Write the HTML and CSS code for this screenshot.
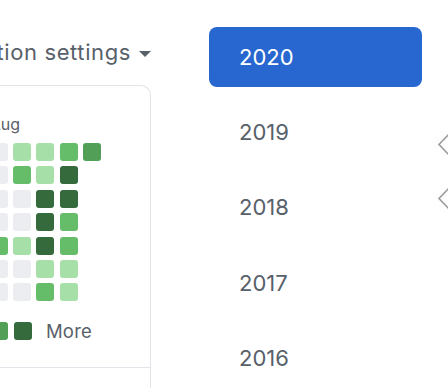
FILE: index.html
```html
<!DOCTYPE html>
<html lang="en">

<head>
    <meta charset="UTF-8">
    <meta name="viewport" content="width=device-width, initial-scale=1.0">
    <title>Contributions</title>
    <link rel="stylesheet" href="styles.css">
</head>

<body>
    <div class="page">
        <div class="left">
            <div class="settings">
                <span>Contribution settings</span>
                <i class="caret"></i>
            </div>

            <div class="card">
                <div class="graph">
                    <div class="calendar">
                        <div class="months"><span>Aug</span></div>
                        <div class="days">
                            <span class="day l0"></span><span class="day l0"></span><span class="day l0"></span><span class="day l0"></span><span class="day l2"></span><span class="day l0"></span><span class="day l0"></span>
                            <span class="day l1"></span><span class="day l2"></span><span class="day l0"></span><span class="day l0"></span><span class="day l1"></span><span class="day l0"></span><span class="day l0"></span>
                            <span class="day l1"></span><span class="day l1"></span><span class="day l4"></span><span class="day l4"></span><span class="day l4"></span><span class="day l1"></span><span class="day l2"></span>
                            <span class="day l2"></span><span class="day l4"></span><span class="day l4"></span><span class="day l2"></span><span class="day l2"></span><span class="day l1"></span><span class="day l1"></span>
                            <span class="day l3"></span>
                        </div>
                    </div>
                </div>
                <div class="legend">
                    <span class="legend-text">Less</span>
                    <span class="day l0"></span>
                    <span class="day l1"></span>
                    <span class="day l2"></span>
                    <span class="day l3"></span>
                    <span class="day l4"></span>
                    <span class="legend-text">More</span>
                </div>
                <div class="card-footer"></div>
            </div>
        </div>

        <ul class="years">
            <li class="year selected">2020</li>
            <li class="year">2019</li>
            <li class="year">2018</li>
            <li class="year">2017</li>
            <li class="year">2016</li>
        </ul>
    </div>

    <div class="peek">
        <svg width="30" height="90" viewBox="0 0 30 90">
            <polyline points="31,9 21,19.5 31,30" fill="none" stroke="#9b9b9b" stroke-width="1.6" />
            <polyline points="31,63 21,73.5 31,84" fill="none" stroke="#9b9b9b" stroke-width="1.6" />
        </svg>
    </div>
</body>

</html>
```

FILE: styles.css
```css
* {
    margin: 0;
    padding: 0;
    box-sizing: border-box;
}

body {
    width: 448px;
    height: 388px;
    overflow: hidden;
    background-color: #fff;
    font-family: Inter, "Liberation Sans", sans-serif;
    color: #586069;
}

.page {
    display: flex;
    height: 388px;
}

.left {
    width: 151px;
    flex: none;
    padding-top: 37px;
    display: flex;
    flex-direction: column;
}

/* 标题，超出部分向左溢出 */
.settings {
    display: flex;
    justify-content: flex-end;
    align-items: center;
    height: 30px;
    font-size: 22px;
    letter-spacing: 0.6px;
    line-height: 30px;
    white-space: nowrap;
}

.caret {
    width: 0;
    height: 0;
    margin-left: 8px;
    margin-top: 4px;
    border-left: 6px solid transparent;
    border-right: 6px solid transparent;
    border-top: 6px solid #586069;
}

.card {
    flex: 1;
    width: 500px;
    margin-top: 18px;
    margin-left: -349px;
    border: 1px solid #e1e4e8;
    border-bottom: none;
    border-radius: 10px 10px 0 0;
    display: flex;
    flex-direction: column;
}

.graph {
    display: flex;
    justify-content: flex-end;
    padding-top: 28px;
    padding-right: 48.8px;
}

.months {
    height: 20px;
    line-height: 20px;
    font-size: 16px;
    margin-bottom: 9px;
}

.days {
    display: grid;
    grid-template-rows: repeat(7, 18px);
    grid-auto-flow: column;
    grid-auto-columns: 18px;
    gap: 5.4px;
}

.day {
    width: 18px;
    height: 18px;
    border-radius: 3px;
    display: inline-block;
}

.l0 { background-color: #ebedf0; }
.l1 { background-color: #a6e0a8; }
.l2 { background-color: #65bd6a; }
.l3 { background-color: #52a057; }
.l4 { background-color: #356b3c; }

.legend {
    display: flex;
    justify-content: flex-end;
    align-items: center;
    gap: 5.4px;
    margin-top: 20.6px;
    padding-right: 58px;
    padding-bottom: 27px;
    white-space: nowrap;
}

.legend-text {
    font-size: 18.5px;
    line-height: 18px;
    letter-spacing: 0.2px;
}

.legend-text:first-child {
    margin-right: 10px;
}

.legend-text:last-child {
    margin-left: 9px;
}

.card-footer {
    flex: 1;
    border-top: 1px solid #e1e4e8;
}

.years {
    list-style: none;
    width: 213px;
    margin-left: 58px;
    padding-top: 27px;
    display: flex;
    flex-direction: column;
    gap: 15.5px;
}

.year {
    height: 60px;
    padding-left: 30px;
    display: flex;
    align-items: center;
    font-size: 22px;
    border-radius: 8px;
}

.year.selected {
    background-color: #2867d0;
    color: #fff;
}

/* 右侧边缘露出的箭头 */
.peek {
    position: absolute;
    left: 418px;
    top: 125px;
    width: 30px;
    height: 90px;
}

.peek svg {
    display: block;
    filter: drop-shadow(0 0 6px rgba(0, 0, 0, 0.08));
}
```
